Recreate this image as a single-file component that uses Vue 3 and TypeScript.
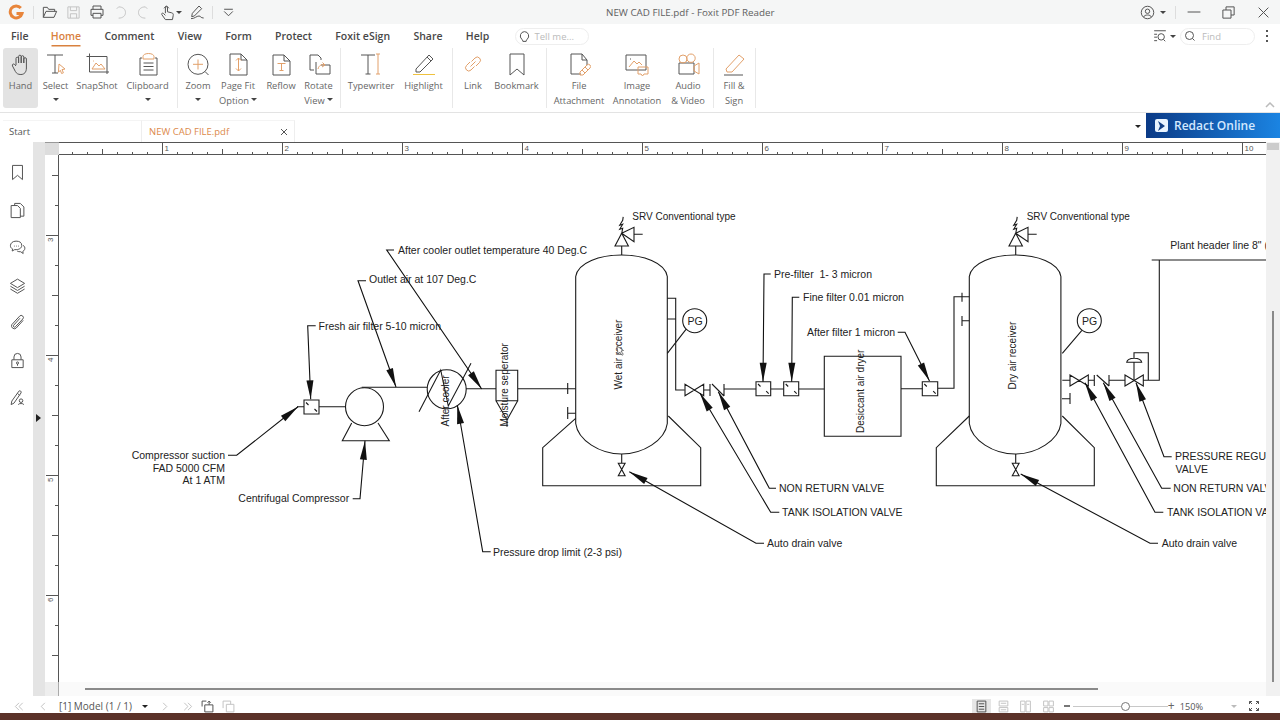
<script setup lang="ts">
import { h } from 'vue'
import type { FunctionalComponent } from 'vue'

const ink = '#555'
const acc = '#e2a06a'
const dim = '#c4c4c4'

type Stroke = [string, string]

// every icon is drawn on a 24 box, one or more strokes
const icons: Record<string, Stroke[]> = {
  hand: [[ink, 'M7 13V6.5a1.3 1.3 0 0 1 2.6 0V11M9.6 11V4.5a1.3 1.3 0 0 1 2.6 0V11M12.2 11V5a1.3 1.3 0 0 1 2.6 0V11M14.8 11V7a1.3 1.3 0 0 1 2.6 0v9c0 4-2 6.5-5.5 6.5-3 0-4.3-1-5.5-3L3.5 14c-.8-1.5 1-2.8 2.2-1.5L7 14']],
  point: [[ink, 'M9 13V4.5a1.5 1.5 0 0 1 3 0V11l6 1.5c2 .5 2.5 2 2 4L19 22H9l-5-7c-1-1.5 1-3 2.5-1.5L9 16M7 6a4 4 0 0 1 7 0']],
  select: [[ink, 'M3 3h16M11 3v18M8 21h6'], [acc, 'M15 12l6 5-3 .6 1.4 3.2-1.8.7-1.3-3.2-1.9 2z']],
  snapshot: [[ink, 'M1.5 4.5h20.5V22M4.5 1.5V20H24'], [acc, 'M7 17l4-6 3 3 2-2 4 5zM8 9h.8']],
  clipboard: [[ink, 'M6 6H4v17h17V6h-2M7.5 11h10M7.5 14.5h10M7.5 18h10'], [acc, 'M7 7V4.5C7 3 9 1.5 12.5 1.5S18 3 18 4.5V7z']],
  zoom: [[ink, 'M12 2.3a10 10 0 1 0 0 20 10 10 0 0 0 0-20zM19 19.5l3.5 3.5'], [acc, 'M12 7.5v10M7 12.3h10']],
  pagefit: [[ink, 'M4 2h11l6 6v15H4zM15 2v6h6'], [acc, 'M12.5 6v13M10 8.5L12.5 6l2.5 2.5M10 16.5l2.5 2.5 2.5-2.5']],
  reflow: [[ink, 'M4 3h11l6 6v14H4zM15 3v6h6'], [acc, 'M8.5 11.5h8M12.5 11.5v7M10.5 18.5h4']],
  rotate: [[ink, 'M7 18H3V3h8l3 3v2M9 10v12h14V13h-9'], [acc, 'M11 17c1-4 4-5 7-4M15.5 10.5l2.5 2.5-3 2']],
  typewriter: [[ink, 'M2 3h14M9 3v19M6.5 22h5'], [acc, 'M19 2v20M17 2h4M17 22h4']],
  highlight: [[ink, 'M4 17L17 3l4 4L8 20H4zM15 5l4 4'], ['#efc23f', 'M1 22.5h22']],
  link: [[acc, 'M10.5 9.5L14 6a3 3 0 0 1 4.5 4.5L15 14M13.5 14.5L10 18a3 3 0 0 1-4.5-4.5L9 10M9.5 14.5l5-5']],
  bookmark: [[ink, 'M5 2h14v21l-7-6-7 6z']],
  attach: [[ink, 'M14 22H4V2h11l5 6v5M15 2v6h5'], [acc, 'M13 20l7-7a2 2 0 0 1 3 3l-7 7h-3zM15 18l3 3M18 15l3 3']],
  image: [[ink, 'M1 3h20v15H1zM5 7h1'], [acc, 'M4 15l5-6 3 3 2-2 3 3M13 15h10v7h-4l-1.5 2-1.5-2h-3z']],
  audio: [[ink, 'M3 11h15v11H3z'], [acc, 'M18 14l5-3v11l-5-3zM7 3a4 4 0 1 0 0 8 4 4 0 0 0 0-8zM15 2a4.2 4.2 0 1 0 0 8.4 4.2 4.2 0 0 0 0-8.4z']],
  fill: [[acc, 'M4 17L17 3l5 4-12 13H5z'], [ink, 'M2 23h19']],

  open: [[ink, 'M2 20V5h6l2 3h9v3M2 20l4-9h16l-4 9z']],
  save: [[dim, 'M3 3h18v18H3zM7 3v6h10V3M7 21v-7h10v7']],
  print: [[ink, 'M6 8V3h12v5M3 8h18v9h-3M6 17H3V8M6 14h12v7H6z']],
  undo: [[dim, 'M9 3C16 3 20 7 20 12s-4 9-11 9M9 3l-3 3']],
  redo: [[dim, 'M15 3C8 3 4 7 4 12s4 9 11 9M15 3l3 3']],
  pen: [[ink, 'M4 19l1-5L15 3l4 4L8 18zM3 22c6 0 8-4 12-4 3 0 2 3 7 3']],
  chevron: [[ink, 'M4 6h16M4 10l8 8 8-8']],
  bulb: [[ink, 'M12 3a8 8 0 0 0-5 14c1 1 2 2 2 4h6c0-2 1-3 2-4a8 8 0 0 0-5-14z']],
  account: [[ink, 'M12 2a10 10 0 1 0 0 20 10 10 0 0 0 0-20zM12 6.5a3.5 3.5 0 1 0 0 7 3.5 3.5 0 0 0 0-7zM6 19c1-4 11-4 12 0']],
  restore: [[ink, 'M3 8h13v13H3zM8 8V3h13v13h-5']],
  close: [[ink, 'M3 3l18 18M21 3L3 21']],
  minimize: [[ink, 'M1 12h22']],
  findopt: [[ink, 'M2 3h20M2 9h5M2 14h5M2 20h5M14 8a5.5 5.5 0 1 0 0 11 5.5 5.5 0 0 0 0-11zM18 18l3 3']],
  search: [[ink, 'M11 3a8 8 0 1 0 0 16 8 8 0 0 0 0-16zM17 17l4 4']],

  sbBookmark: [[ink, 'M5 2h14v20l-7-6-7 6z']],
  sbPages: [[ink, 'M8 5V2h8l5 5v13h-5M3 5h9l4 4v13H3z']],
  sbComment: [[ink, 'M10 3c-5 0-8 3-8 6.5 0 2 1 3.5 3 4.5l-.5 3 3.5-2c6 .5 10-2 10-6S15 3 10 3zM7 10h1M10 10h1M13 10h1M20 9c2 1.5 3 3 2 6-.5 1-1.5 2-2.5 2.5l.5 3-3.5-2.5c-2 0-3.5 0-5-1']],
  sbLayers: [[ink, 'M12 3L2 9l10 6 10-6zM2 13l10 6 10-6M2 17l10 6 10-6']],
  sbClip: [[ink, 'M20 9l-10 11a4 4 0 0 1-6-5L15 3a3 3 0 0 1 4.5 4L9 18a1.5 1.5 0 0 1-2.5-2l9-10']],
  sbLock: [[ink, 'M4 11h16v11H4zM7 11V7a5 5 0 0 1 10 0v4M12 14a1.5 1.5 0 1 0 0 3v2-2a1.5 1.5 0 1 0 0-3z']],
  sbSign: [[ink, 'M3 22l1-5L14 3c1.5-1.5 4 .5 3 2.5L7 20zM12 6l3 3M17 14a2.5 2.5 0 1 0 0 5 2.5 2.5 0 0 0 0-5zM13 22c1-2 7-2 8 0']],

  first: [[dim, 'M11 4l-8 8 8 8M19 4l-8 8 8 8']],
  prev: [[dim, 'M15 4l-8 8 8 8']],
  next: [[dim, 'M9 4l8 8-8 8']],
  last: [[dim, 'M5 4l8 8-8 8M13 4l8 8-8 8']],
  pgBack: [[ink, 'M2 12V2h8M7 9h15v13H7zM12 5l3-3 3 3M15 2v7']],
  pgFwd: [[dim, 'M2 15V2h14v6M8 8h14v14H8z']],
  vwSingle: [[ink, 'M4 2h16v20H4zM7 7h10M7 12h10M7 17h10']],
  vwCont: [[dim, 'M4 2h16v9H4zM4 14h16v8H4zM7 6h10M7 18h10']],
  vwTwo: [[dim, 'M3 2h8v20H3zM13 2h8v20h-8zM5 8h4M15 8h4']],
  vwTwoCont: [[dim, 'M3 2h8v9H3zM13 2h8v9h-8zM3 14h8v8H3zM13 14h8v8h-8z']],
  fullscreen: [[ink, 'M8 3H3v5M16 3h5v5M8 21H3v-5M16 21h5v-5M3 3l5 5M21 3l-5 5M3 21l5-5M21 21l-5-5']],
}

const Ico: FunctionalComponent<{ n: string; s?: number }> = (p) => {
  const s = p.s ?? 24
  return h('svg', { width: s, height: s, viewBox: '0 0 24 24', fill: 'none', 'stroke-width': 24 / s, class: 'ico' },
    icons[p.n].map(([c, d]) => h('path', { d, stroke: c })))
}
Ico.props = ['n', 's']

const tabs = ['File', 'Home', 'Comment', 'View', 'Form', 'Protect', 'Foxit eSign', 'Share', 'Help']

interface RibbonItem { icon: string; w: number; a: string; b?: string; caret?: boolean; on?: boolean }

const ribbon: { w: number; items: RibbonItem[] }[] = [
  { w: 175, items: [
    { icon: 'hand', w: 35, a: 'Hand', on: true },
    { icon: 'select', w: 35, a: 'Select', caret: true },
    { icon: 'snapshot', w: 48, a: 'SnapShot' },
    { icon: 'clipboard', w: 53, a: 'Clipboard', caret: true },
  ] },
  { w: 163, items: [
    { icon: 'zoom', w: 40, a: 'Zoom', caret: true },
    { icon: 'pagefit', w: 40, a: 'Page Fit', b: 'Option', caret: true },
    { icon: 'reflow', w: 46, a: 'Reflow' },
    { icon: 'rotate', w: 29, a: 'Rotate', b: 'View', caret: true },
  ] },
  { w: 112, items: [
    { icon: 'typewriter', w: 60, a: 'Typewriter' },
    { icon: 'highlight', w: 45, a: 'Highlight' },
  ] },
  { w: 94, items: [
    { icon: 'link', w: 40, a: 'Link' },
    { icon: 'bookmark', w: 47, a: 'Bookmark' },
  ] },
  { w: 167, items: [
    { icon: 'attach', w: 64, a: 'File', b: 'Attachment' },
    { icon: 'image', w: 52, a: 'Image', b: 'Annotation' },
    { icon: 'audio', w: 50, a: 'Audio', b: '& Video' },
  ] },
  { w: 42, items: [{ icon: 'fill', w: 40, a: 'Fill &', b: 'Sign' }] },
]

const sideIcons = ['sbBookmark', 'sbPages', 'sbComment', 'sbLayers', 'sbClip', 'sbLock', 'sbSign']

// rulers, page pixels: 120px per inch
const hTicks: { x: number; y: number }[] = []
const hLabels: { x: number; t: string }[] = []
for (let i = -6; i < 73; i++) {
  const x = 162.5 + i * 15
  if (x < 59 || x > 1266) continue
  if (i % 8 === 0) hLabels.push({ x, t: String(i / 8 + 1) })
  hTicks.push({ x, y: i % 8 === 0 ? 142 : i % 4 === 0 ? 149 : 152 })
}
const vTicks: { y: number; len: number }[] = []
const vLabels: { y: number; t: string }[] = []
for (let i = -2; i < 16; i++) {
  const y = 235.5 + i * 30
  if (i % 4 === 0) vLabels.push({ y, t: String(i / 4 + 3) })
  vTicks.push({ y, len: i % 4 === 0 ? 13 : i % 2 === 0 ? 7 : 4 })
}

// pipework and vessels of the diagram
const SHIFT = 394.4
const receiver = 'c2.3-14 24.3-21.5 45.8-21.5s43.5 7.5 45.8 21.5v147c-2.3 17-24.3 30.5-45.8 30.5s-43.5-13.5-45.8-30.5z'
function srvAt(x: number) {
  return `M${x} 255v-9m-6.7 0h13.4l-6.7-12.7zM${x} 233.3l12.3-6v14.4zM${x + 12.3} 234.3h8.7M${x} 233.3l1-5-3 1 3-5-3 1 3-5 .5-3.5`
}
function drainAt(x: number) {
  return `M${x} 454v9.3M${x - 3.4} 463.3h6.8l-6.8 12.4h6.8z`
}
const pipes = [
  // filter, compressor, cooler
  'M297 406.7h7M304 400h15v14h-15zM306 402.5l2.5 2.5M317 411.5l-2.5-2.5M319 406.7h26',
  'M364.5 387.7a19 19 0 1 0 0 38 19 19 0 0 0 0-38zM351.7 423l-9.4 17.7h47L378 423',
  'M361.7 387.3h65.6M446.7 369.8a19.5 19.5 0 1 0 0 39 19.5 19.5 0 0 0 0-39z',
  'M419 411.7L440.7 370l7.6 36L471 363.3M466 388.7h30',
  // moisture separator
  'M496 370.3h21.7v30.4H496zM496 400.7l11 19.3 10.7-19.3M507 420v6.7M517.7 388.7h58M567.7 383v11M575.7 413.3h-8M567.7 407v12',
  // wet receiver
  `M575.7 276.5${receiver}`,
  srvAt(621.7),
  drainAt(621.7),
  'M667.3 298.3h8.4V390h9M667.3 319h8.4',
  'M694.7 308.7a12 12 0 1 0 0 24 12 12 0 0 0 0-24zM686 329.3l-18.7 24',
  'M575.7 418.3l-33 29.4v38h158v-38l-32.4-31.7',
  'M685 384.3v11.4l18.7-11.4v11.4zM703.7 390h6.3M710 384v12M712 384l12 12M724 384v12M724 389h32',
  // filters, dryer
  'M756 381.7h14.7v14H756zM758 384l2.5 2.5M768.7 393.7l-2.5-2.5M770.7 389h13',
  'M783.7 381.7h15v14h-15zM785.7 384l2.5 2.5M796.7 393.7l-2.5-2.5M798.7 389h25.6',
  'M824.3 356.3H901v80h-76.7zM901 388.7h21.3',
  'M922.3 381.7h15.4v14h-15.4zM924.3 384l2.5 2.5M935.7 393.7l-2.5-2.5M937.7 388.3H954V296.7h15.3M962 292.7v9M969.3 320.7H962M962 316v10',
  // dry receiver
  `M${575.7 + SHIFT - 0.8} 276.5${receiver}`,
  srvAt(1015.7),
  drainAt(1015.7),
  'M1089.3 308.7a12 12 0 1 0 0 24 12 12 0 0 0 0-24zM1081.7 330.7l-19.4 22.6',
  'M969.3 416l-33 31.7v38h158v-38L1062.3 416',
  'M1062.3 380.3h7.7M1070 375v11l18.3-11v11zM1088.3 380.3h6M1094.3 375v11M1096.7 375l12.3 11M1109 375v11M1109 380.3h16',
  'M1125 375v11l18.3-11v11zM1143.3 380.3h16V260M1151.7 260H1266',
  'M1134 380v-17.7M1126.7 362.3c1-5.5 14-5.5 15 0zM1134 358v-5.3h14.3V380',
  'M1062 398.7h8M1070 393v11',
]

// leader lines, the last point is the arrow tip
const leaders: number[][][] = [
  [[394, 250], [386.7, 250], [481.7, 389]],
  [[366, 280.7], [358, 280.7], [396, 387]],
  [[315.7, 325.7], [307.7, 325.7], [310.7, 399.3]],
  [[228, 455.3], [236.7, 455.3], [298, 406.7]],
  [[352.7, 498.7], [360, 498.7], [365, 440.7]],
  [[490.7, 551.7], [482.7, 551.7], [457.3, 405]],
  [[764, 543.3], [756, 543.3], [629.3, 471.7]],
  [[779.3, 512.3], [770.7, 512.3], [700, 393.3]],
  [[776, 488.3], [769.3, 488.3], [718.3, 391.7]],
  [[770.7, 274], [764, 274], [763, 381.7]],
  [[799.3, 297.3], [792.3, 297.3], [791.7, 381.7]],
  [[897.7, 332.3], [905, 332.3], [929.5, 381]],
  [[1158, 543.3], [1150, 543.3], [1020.7, 474]],
  [[1163.3, 512.3], [1155, 512.3], [1085, 382.7]],
  [[1170.7, 488.3], [1161.7, 488.3], [1103.3, 382.7]],
  [[1171.7, 456.7], [1164, 456.7], [1136, 382.7]],
]

function leaderPath(pts: number[][]) {
  return pts.map((p, i) => `${i ? 'L' : 'M'}${p[0]} ${p[1]}`).join('')
}
function arrowHead(pts: number[][]) {
  const [bx, by] = pts[pts.length - 2]
  const [tx, ty] = pts[pts.length - 1]
  const len = Math.hypot(tx - bx, ty - by)
  const ux = (tx - bx) / len
  const uy = (ty - by) / len
  const cx = tx - ux * 19
  const cy = ty - uy * 19
  return `${tx},${ty} ${cx - uy * 3.5},${cy + ux * 3.5} ${cx + uy * 3.5},${cy - ux * 3.5}`
}

const labels: { x: number; y: number; t: string; end?: boolean; sm?: boolean }[] = [
  { x: 398, y: 253.5, t: 'After cooler outlet temperature 40 Deg.C' },
  { x: 369, y: 283, t: 'Outlet air at 107 Deg.C' },
  { x: 318.5, y: 329.5, t: 'Fresh air filter 5-10 micron' },
  { x: 225, y: 459.3, t: 'Compressor suction', end: true },
  { x: 225, y: 471.7, t: 'FAD 5000 CFM', end: true },
  { x: 225, y: 484, t: 'At 1 ATM', end: true },
  { x: 238.3, y: 502, t: 'Centrifugal Compressor' },
  { x: 493, y: 556, t: 'Pressure drop limit (2-3 psi)' },
  { x: 632.3, y: 220, t: 'SRV Conventional type', sm: true },
  { x: 1026.7, y: 220, t: 'SRV Conventional type', sm: true },
  { x: 774, y: 278, t: 'Pre-filter  1- 3 micron' },
  { x: 803, y: 301, t: 'Fine filter 0.01 micron' },
  { x: 807, y: 336, t: 'After filter 1 micron' },
  { x: 779, y: 492, t: 'NON RETURN VALVE' },
  { x: 782, y: 516, t: 'TANK ISOLATION VALVE' },
  { x: 767, y: 547, t: 'Auto drain valve' },
  { x: 1161.7, y: 547, t: 'Auto drain valve' },
  { x: 1167, y: 516, t: 'TANK ISOLATION VALVE' },
  { x: 1173.3, y: 492, t: 'NON RETURN VALVE' },
  { x: 1175, y: 460, t: 'PRESSURE REGU' },
  { x: 1175.6, y: 473, t: 'VALVE' },
  { x: 1170.3, y: 249, t: 'Plant header line 8" (2' },
  { x: 687.5, y: 324.5, t: 'PG' },
  { x: 1082, y: 324.5, t: 'PG' },
]

const upright: { x: number; y: number; t: string }[] = [
  { x: 449, y: 426.5, t: 'After cooler' },
  { x: 508, y: 426.5, t: 'Moisture seperator' },
  { x: 622, y: 389.5, t: 'Wet air receiver' },
  { x: 863.5, y: 433, t: 'Desiccant air dryer' },
  { x: 1016, y: 389.5, t: 'Dry air receiver' },
]
</script>

<template>
  <div class="app">
    <!-- Title bar -->
    <header class="titlebar">
      <div class="quick">
        <svg class="logo" width="16" height="16" viewBox="0 0 16 16" fill="none">
          <path d="M12.8 4A6 6 0 1 0 14 9.5H8.5" stroke="#e8853b" stroke-width="3" />
        </svg>
        <i class="vsep" />
        <Ico n="open" :s="16" class="q1" />
        <Ico n="save" :s="15" class="q2" />
        <Ico n="print" :s="16" class="q3" />
        <Ico n="undo" :s="15" class="q3" />
        <Ico n="redo" :s="15" class="q3" />
        <Ico n="point" :s="17" class="q4" />
        <i class="caret" />
        <Ico n="pen" :s="16" class="q5" />
        <i class="vsep q6" />
        <Ico n="chevron" :s="13" class="q7" />
      </div>
      <div class="doc-title">NEW CAD FILE.pdf - Foxit PDF Reader</div>
      <div class="winctl">
        <Ico n="account" :s="15" />
        <i class="caret" />
        <i class="vsep q8" />
        <Ico n="minimize" :s="14" class="q9" />
        <Ico n="restore" :s="15" class="q10" />
        <Ico n="close" :s="13" class="q11" />
      </div>
    </header>

    <!-- Menu tabs -->
    <nav class="menubar">
      <span v-for="t in tabs" :key="t" class="menu" :class="{ active: t === 'Home', file: t === 'File' }">{{ t }}</span>
      <div class="pill tell">
        <Ico n="bulb" :s="13" />
        <span>Tell me...</span>
      </div>
      <div class="find">
        <Ico n="findopt" :s="14" />
        <i class="caret" />
        <div class="pill findbox">
          <Ico n="search" :s="12" />
          <span>Find</span>
        </div>
        <span class="dots"><i /><i /><i /></span>
      </div>
    </nav>

    <!-- Ribbon -->
    <section class="ribbon">
      <div v-for="(g, gi) in ribbon" :key="gi" class="group" :style="{ width: g.w + 'px' }">
        <div v-for="b in g.items" :key="b.a" class="rbtn" :class="{ on: b.on }" :style="{ width: b.w + 'px' }">
          <Ico :n="b.icon" />
          <span class="rlabel">{{ b.a }}</span>
          <span class="rlabel">{{ b.b }}<i v-if="b.caret" class="caret" :class="{ solo: !b.b }" /></span>
        </div>
      </div>
      <svg class="collapse" width="10" height="6" viewBox="0 0 10 6" fill="none">
        <path d="M1 5l4-4 4 4" stroke="#bbb" stroke-width="1.5" />
      </svg>
    </section>

    <!-- Document tabs -->
    <div class="tabrow">
      <div class="doctab start">Start</div>
      <div class="doctab current">
        <span>NEW CAD FILE.pdf</span>
        <Ico n="close" :s="8" />
      </div>
      <i class="caret dark tabcaret" />
      <div class="redact">
        <span class="redact-ico"><svg width="9" height="10" viewBox="0 0 9 10"><path d="M1 0l7 5-7 5 2-5z" fill="#123f85" /></svg></span>
        Redact Online
      </div>
    </div>

    <!-- Workspace -->
    <div class="workspace">
      <aside class="sidebar">
        <Ico v-for="n in sideIcons" :key="n" :n="n" :s="17" />
      </aside>
      <div class="gutter"><i class="expand" /></div>
      <div class="corner" />

      <svg class="hruler" viewBox="59 142 1207 13" width="1207" height="13">
        <path d="M59 142.5H1266M59 154.5H1266" stroke="#555" />
        <path v-for="t in hTicks" :key="t.x" :d="`M${t.x} ${t.y}V155`" stroke="#555" />
        <text v-for="l in hLabels" :key="l.t" :x="l.x + 2" y="151" class="rulertext">{{ l.t }}</text>
      </svg>
      <div class="vscroll"><div class="vcap" /><div class="vthumb" /></div>

      <svg class="vruler" viewBox="45 155 14 527" width="14" height="527">
        <path d="M58.5 155V682" stroke="#555" />
        <path v-for="t in vTicks" :key="t.y" :d="`M${59 - t.len} ${t.y}H59`" stroke="#555" />
        <text v-for="l in vLabels" :key="l.t" class="rulertext" :transform="`translate(53 ${l.y + 2}) rotate(-90)`" text-anchor="end">{{ l.t }}</text>
      </svg>

      <svg class="page" viewBox="59 155 1207 527" width="1207" height="527" fill="none">
        <path v-for="(d, i) in pipes" :key="i" :d="d" stroke="#1a1a1a" stroke-width="1.1" />
        <template v-for="(l, i) in leaders" :key="'l' + i">
          <path :d="leaderPath(l)" stroke="#111" stroke-width="1.1" />
          <polygon :points="arrowHead(l)" fill="#111" />
        </template>
        <text
          v-for="l in labels" :key="l.t + l.x" :x="l.x" :y="l.y" class="dwg" :class="{ sm: l.sm }"
          :text-anchor="l.end ? 'end' : 'start'"
        >{{ l.t }}</text>
        <text v-for="l in upright" :key="l.t" class="dwg sm" :transform="`translate(${l.x} ${l.y}) rotate(-90)`">{{ l.t }}</text>
        <!-- mouse pointer over the receiver label -->
        <path d="M617 346l1 8 1.7-2 2.3 3.3 1.3-1-2.3-3.3 2.5-.5z" fill="#fff" stroke="#444" stroke-width=".7" />
      </svg>

      <div class="bl-corner" />
      <div class="hscroll"><div class="hthumb" /></div>
    </div>

    <!-- Status bar -->
    <footer class="statusbar">
      <div class="pager">
        <Ico n="first" :s="11" class="p1" />
        <Ico n="prev" :s="11" class="p2" />
        <span class="pagelabel">[1] Model (1 / 1)</span>
        <i class="caret dark p3" />
        <Ico n="next" :s="11" class="p4" />
        <Ico n="last" :s="11" class="p5" />
        <Ico n="pgBack" :s="13" class="p6" />
        <Ico n="pgFwd" :s="13" class="p7" />
      </div>
      <div class="viewctl">
        <span class="viewon"><Ico n="vwSingle" :s="13" /></span>
        <Ico n="vwCont" :s="13" class="v0" />
        <Ico n="vwTwo" :s="13" class="v1" />
        <Ico n="vwTwoCont" :s="13" class="v2" />
        <span class="minus" />
        <div class="slider"><i /></div>
        <span class="plus">+</span>
        <span class="pct">150%</span>
        <i class="caret light pctcaret" />
        <Ico n="fullscreen" :s="12" class="fs" />
      </div>
    </footer>
    <div class="taskstrip" />
  </div>
</template>

<style>
html, body { margin: 0; padding: 0; background: #fff; }
</style>

<style scoped>
.app {
  width: 1280px; height: 720px; overflow: hidden; display: flex; flex-direction: column;
  font-family: "Open Sans", "Noto Sans", sans-serif; color: #555; background: #fff;
}
.ico { display: block; flex: none; }
.caret {
  display: inline-block; width: 0; height: 0; margin-left: 2px; vertical-align: 3px;
  border-left: 3px solid transparent; border-right: 3px solid transparent; border-top: 3.5px solid #444;
}
.caret.solo { margin-left: 0; }
.caret.dark { border-top-color: #222; }
.caret.light { border-top-color: #bbb; }
.vsep { display: block; width: 1px; height: 13px; background: #ddd; flex: none; }

/* title bar */
.titlebar { height: 24px; flex: none; display: flex; align-items: center; background: #f5f6f6; }
.quick { width: 606px; flex: none; display: flex; align-items: center; padding-left: 8px; box-sizing: border-box; }
.quick .vsep { margin-left: 9px; }
.quick .caret { margin-left: 0; }
.q1 { margin-left: 8px; }
.q2 { margin-left: 8px; }
.q3 { margin-left: 8px; }
.q4 { margin-left: 8px; }
.q5 { margin-left: 7px; }
.quick .q6 { margin-left: 7px; }
.q7 { margin-left: 9px; }
.doc-title { font-size: 9.8px; color: #606060; white-space: nowrap; }
.winctl { margin-left: auto; display: flex; align-items: center; padding-right: 10px; }
.winctl .caret { margin-left: 5px; }
.q8 { margin-left: 9px; }
.q9 { margin-left: 11px; }
.q10 { margin-left: 20px; }
.q11 { margin-left: 21px; }

/* menu */
.menubar { height: 24px; flex: none; display: flex; align-items: center; gap: 23.3px; padding-left: 11px; box-sizing: border-box; }
.menu { font-size: 10.5px; font-weight: 600; color: #484848; line-height: 20px; }
.menu.file { margin-right: -1px; }
.menu.active { color: #d9813f; box-shadow: 0 2px 0 -0.5px #d9813f; line-height: 17px; }
.pill {
  display: flex; align-items: center; border: 1px solid #eee; border-radius: 9px; height: 17px;
  box-sizing: border-box; font-size: 9.5px; color: #bbb; gap: 4px;
}
.tell { width: 74px; margin-left: 2px; padding-left: 2px; }
.find { margin-left: auto; display: flex; align-items: center; padding-right: 12px; }
.find .caret { margin-left: 3px; }
.findbox { width: 75px; margin-left: 4px; padding-left: 3px; gap: 6px; }
.dots { display: flex; flex-direction: column; gap: 3px; margin-left: 11px; }
.dots i { display: block; width: 2px; height: 2px; background: #555; }

/* ribbon */
.ribbon { height: 65px; flex: none; box-sizing: border-box; display: flex; padding-left: 3px; border-bottom: 1px solid #e3e3e3; }
.group { height: 60px; display: flex; box-sizing: border-box; border-right: 1px solid #e8e8e8; flex: none; }
.rbtn {
  flex: none; height: 60px; box-sizing: border-box; padding-top: 4px; display: flex; flex-direction: column;
  align-items: center; border-radius: 3px;
}
.rbtn.on { background: #e3e3e3; }
.rbtn .ico { margin-bottom: 2px; }
.rlabel { font-size: 9.3px; line-height: 15px; height: 15px; color: #666; white-space: nowrap; }
.collapse { margin: 54px 5px 0 auto; flex: none; }

/* tabs */
.tabrow { height: 29px; flex: none; display: flex; align-items: flex-start; box-sizing: border-box; }
.doctab { margin-top: 7px; height: 22px; box-sizing: border-box; font-size: 9.5px; display: flex; align-items: center; border-top: 1px solid #f4f4f4; }
.start { width: 139px; margin-left: 3px; padding-left: 6px; color: #555; border-right: 1px solid #eee; }
.current { width: 153px; padding: 0 6px 0 7px; justify-content: space-between; color: #dc8a4c; border-right: 1px solid #eee; }
.tabcaret { margin: 12px 0 0 auto; }
.redact {
  width: 134px; height: 25px; margin-left: 5px; flex: none; display: flex; align-items: center; box-sizing: border-box;
  padding-left: 9px; gap: 6px; font-size: 12px; font-weight: 600; color: #d3e9ff;
  background: linear-gradient(90deg, #0b3a86, #1b84e2);
}
.redact-ico { width: 13px; height: 13px; border-radius: 2px; background: #e9f4ff; display: flex; align-items: center; justify-content: center; }

/* workspace */
.workspace {
  flex: 1; min-height: 0; display: grid;
  grid-template-columns: 33px 12px 14px 1207px 14px; grid-template-rows: 13px 527px 14px;
}
.sidebar {
  grid-column: 1; grid-row: 1 / 4; display: flex; flex-direction: column; align-items: center;
  padding: 22px 0 0 2px; gap: 20.5px; box-sizing: border-box;
}
.gutter { grid-column: 2; grid-row: 1 / 4; background: #e4e4e4; padding: 272px 0 0 3px; box-sizing: border-box; }
.expand { display: block; width: 0; height: 0; border-left: 5px solid #222; border-top: 4px solid transparent; border-bottom: 4px solid transparent; }
.corner { grid-column: 3; grid-row: 1; background: #ddd; border-top: 1px solid #999; }
.hruler { grid-column: 4; grid-row: 1; display: block; }
.vruler { grid-column: 3; grid-row: 2; display: block; }
.page { grid-column: 4; grid-row: 2; display: block; background: #fff; }
.vscroll { grid-column: 5; grid-row: 1 / 4; background: #f1f1f1; display: flex; flex-direction: column; padding-bottom: 14px; box-sizing: border-box; }
.vcap { height: 7px; flex: none; background: #ccc; margin: 1px 1px 0 1px; }
.vthumb { flex: 1; width: 2px; background: #8a8a8a; margin: 161px 0 0 6px; }
.bl-corner { grid-column: 3; grid-row: 3; background: #eee; border-right: 1px solid #aaa; }
.hscroll { grid-column: 4; grid-row: 3; padding: 6px 168px 0 26px; box-sizing: border-box; background: #fafafa; }
.hthumb { height: 2px; background: #8a8a8a; }
.rulertext { font: 8px "Liberation Sans", sans-serif; fill: #555; }
.dwg { font: 10.5px "Liberation Sans", Arial, sans-serif; fill: #222; white-space: pre; }
.dwg.sm { font-size: 10px; }

/* status bar */
.statusbar { height: 17px; flex: none; padding-top: 3px; box-sizing: border-box; display: flex; align-items: center; justify-content: space-between; font-size: 10px; }
.pager, .viewctl { display: flex; align-items: center; }
.p1 { margin-left: 14px; }
.p2 { margin-left: 13px; }
.pagelabel { margin-left: 10px; color: #555; white-space: nowrap; }
.p3 { margin-left: 10px; }
.p4 { margin-left: 11px; }
.p5 { margin-left: 12px; }
.p6 { margin-left: 8px; }
.p7 { margin-left: 8px; }
.viewctl { padding-right: 20px; }
.viewon { padding: 1px 3px; background: #e6e6e6; }
.v0 { margin-left: 6px; }
.v1 { margin-left: 9px; }
.v2 { margin-left: 10px; }
.minus { width: 6px; height: 2px; background: #777; margin-left: 9px; }
.slider { width: 95px; height: 1px; margin-left: 3px; background: #c8c8c8; display: flex; align-items: center; padding-left: 48px; box-sizing: border-box; }
.slider i { display: block; width: 7px; height: 7px; background: #fff; border: 1px solid #777; border-radius: 50%; flex: none; }
.plus { margin-left: 0; font-size: 12px; line-height: 12px; color: #666; }
.pct { margin-left: 5px; font-size: 9.2px; color: #555; }
.pctcaret { margin-left: 28px; }
.fs { margin-left: 11px; }
.taskstrip { height: 7px; flex: none; background: #5b3229; }
</style>
